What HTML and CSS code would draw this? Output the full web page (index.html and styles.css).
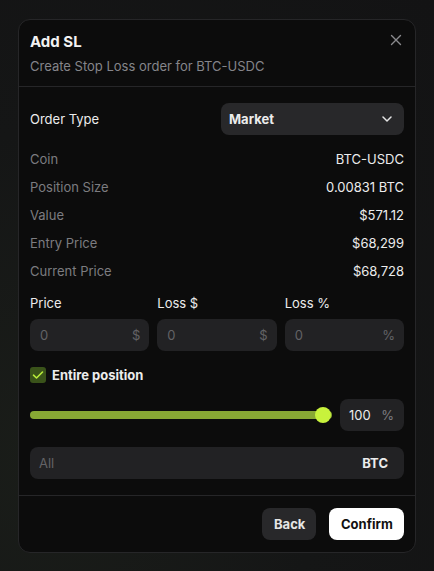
FILE: index.html
```html
<!DOCTYPE html>
<html>
<head>
<meta charset="utf-8">
<link rel="stylesheet" href="styles.css">
</head>
<body>
<div class="overlay">
  <div class="modal">
    <div class="header">
      <div class="title">Add SL</div>
      <div class="subtitle">Create Stop Loss order for BTC-USDC</div>
      <svg class="close" width="12" height="12" viewBox="0 0 12 12"><path d="M1.5 1.5 L10.5 10.5 M10.5 1.5 L1.5 10.5" stroke="#8a8a8e" stroke-width="1.4" stroke-linecap="round"/></svg>
    </div>
    <div class="body">
      <div class="order-row">
        <span class="order-label">Order Type</span>
        <div class="select">
          <span>Market</span>
          <svg width="10" height="6" viewBox="0 0 10 6"><path d="M1 1 L5 5 L9 1" fill="none" stroke="#e5e5e5" stroke-width="1.5" stroke-linecap="round" stroke-linejoin="round"/></svg>
        </div>
      </div>
      <div class="info">
        <div class="info-row"><span>Coin</span><span class="val">BTC-USDC</span></div>
        <div class="info-row"><span>Position Size</span><span class="val">0.00831 BTC</span></div>
        <div class="info-row"><span>Value</span><span class="val">$571.12</span></div>
        <div class="info-row"><span>Entry Price</span><span class="val">$68,299</span></div>
        <div class="info-row"><span>Current Price</span><span class="val">$68,728</span></div>
      </div>
      <div class="fields">
        <div class="field"><div class="flabel">Price</div><div class="input"><span>0</span><span>$</span></div></div>
        <div class="field"><div class="flabel">Loss $</div><div class="input"><span>0</span><span>$</span></div></div>
        <div class="field"><div class="flabel">Loss %</div><div class="input"><span>0</span><span>%</span></div></div>
      </div>
      <div class="check-row">
        <div class="checkbox"><svg width="12" height="10" viewBox="0 0 12 10"><path d="M1.5 5.2 L4.5 8 L10.5 2" fill="none" stroke="#b8ec3a" stroke-width="1.6" stroke-linecap="round" stroke-linejoin="round"/></svg></div>
        <span>Entire position</span>
      </div>
      <div class="slider-row">
        <div class="slider"><div class="track"></div><div class="thumb"></div></div>
        <div class="pct"><span class="num">100</span><span class="unit">%</span></div>
      </div>
      <div class="amount"><span class="all">All</span><span class="btc">BTC</span></div>
    </div>
    <div class="footer">
      <button class="btn back">Back</button>
      <button class="btn confirm">Confirm</button>
    </div>
  </div>
</div>
</body>
</html>
```
FILE: styles.css
```css
* { box-sizing: border-box; }
html, body { margin: 0; padding: 0; }
body {
  width: 434px;
  height: 571px;
  background: radial-gradient(ellipse at 10% 80%, #1a1d19 0%, #151616 50%, #131314 100%);
  font-family: Inter, "Noto Sans", sans-serif;
  overflow: hidden;
}
.overlay {
  padding: 19px 18px 0 18px;
}
.modal {
  width: 398px;
  height: 534px;
  background: #0c0c0c;
  border: 1px solid #262628;
  border-radius: 12px;
  display: flex;
  flex-direction: column;
}
.header {
  position: relative;
  padding: 12px 11px 11px 11px;
  border-bottom: 1px solid #262628;
}
.title {
  color: #f2f2f2;
  font-size: 15px;
  font-weight: 700;
  line-height: 20px;
}
.subtitle {
  margin-top: 5px;
  color: #85858a;
  font-size: 13px;
  line-height: 18px;
}
.close {
  position: absolute;
  right: 13px;
  top: 14px;
}
.body {
  padding: 16px 11px 16px 11px;
  border-bottom: 1px solid #262628;
  display: flex;
  flex-direction: column;
}
.order-row {
  display: flex;
  align-items: center;
  justify-content: space-between;
  height: 32px;
}
.order-label {
  color: #ececec;
  font-size: 13px;
  font-weight: 400;
}
.select {
  width: 183px;
  height: 32px;
  background: #28282a;
  border-radius: 8px;
  display: flex;
  align-items: center;
  justify-content: space-between;
  padding: 0 12px 0 8px;
  color: #ececec;
  font-size: 13px;
  font-weight: 700;
}
.info {
  margin-top: 10px;
  display: flex;
  flex-direction: column;
}
.info-row {
  height: 28px;
  display: flex;
  align-items: center;
  justify-content: space-between;
  color: #7c7c80;
  font-size: 13px;
}
.info-row .val {
  color: #ececec;
}
.fields {
  margin-top: 10px;
  display: flex;
  gap: 8px;
}
.field {
  flex: 1;
}
.flabel {
  color: #ececec;
  font-size: 13px;
  font-weight: 400;
  line-height: 16px;
  margin-bottom: 8px;
}
.input {
  height: 32px;
  background: #222224;
  border-radius: 8px;
  display: flex;
  align-items: center;
  justify-content: space-between;
  padding: 0 9px 0 10px;
  color: #636366;
  font-size: 13px;
}
.check-row {
  margin-top: 16px;
  height: 16px;
  display: flex;
  align-items: center;
  gap: 6px;
  color: #ececec;
  font-size: 13px;
  font-weight: 700;
}
.checkbox {
  width: 16px;
  height: 16px;
  border-radius: 3px;
  background: #3a531a;
  display: flex;
  align-items: center;
  justify-content: center;
}
.slider-row {
  margin-top: 16px;
  display: flex;
  align-items: center;
  gap: 8px;
  height: 32px;
}
.slider {
  flex: 1;
  position: relative;
  height: 16px;
  display: flex;
  align-items: center;
}
.track {
  width: 100%;
  height: 8px;
  border-radius: 4px;
  background: #88a834;
}
.thumb {
  position: absolute;
  right: 1px;
  top: 0;
  width: 16px;
  height: 16px;
  border-radius: 50%;
  background: #c8f23c;
}
.pct {
  width: 64px;
  height: 32px;
  background: #222224;
  border-radius: 8px;
  display: flex;
  align-items: center;
  justify-content: space-between;
  padding: 0 10px 0 9px;
  font-size: 13px;
}
.pct .num { color: #ececec; }
.pct .unit { color: #7c7c80; }
.amount {
  margin-top: 16px;
  height: 32px;
  background: #222224;
  border-radius: 8px;
  display: flex;
  align-items: center;
  justify-content: space-between;
  padding: 0 16px 0 9px;
  font-size: 13px;
}
.amount .all { color: #636366; }
.amount .btc { color: #ececec; font-weight: 700; }
.footer {
  display: flex;
  justify-content: flex-end;
  gap: 13px;
  padding: 12px 11px;
}
.btn {
  height: 32px;
  border: none;
  border-radius: 8px;
  font-family: Inter, "Noto Sans", sans-serif;
  font-size: 13px;
  font-weight: 700;
  padding: 0 12px;
}
.back {
  width: 54px;
  background: #28282a;
  color: #e5e5e5;
}
.confirm {
  width: 75px;
  background: #ffffff;
  color: #111111;
}
```
